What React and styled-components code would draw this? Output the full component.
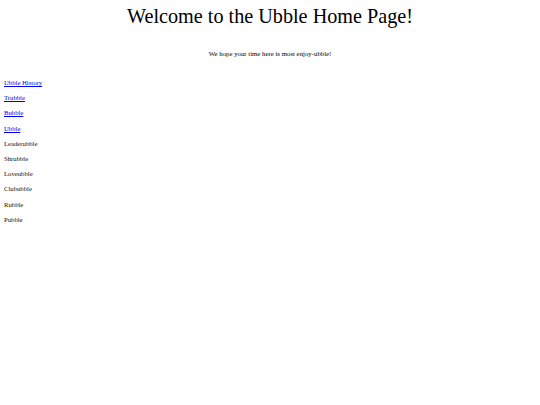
import React from "react";
import styled, { createGlobalStyle } from "styled-components";

const GlobalStyle = createGlobalStyle`
  body {
    margin: 0;
    background: white;
    font-family: "Liberation Serif", "Times New Roman", serif;
    color: black;
  }
`;

const Page = styled.div`
  display: flex;
  flex-direction: column;
  padding: 0 4px;
`;

const Title = styled.h1`
  margin: 4px 0 0;
  text-align: center;
  font-size: 20.2px;
  font-weight: normal;
  line-height: 24px;
`;

const Tagline = styled.p`
  margin: 21px 0 0;
  text-align: center;
  font-size: 6.8px;
  line-height: 10px;
`;

const Menu = styled.nav`
  display: flex;
  flex-direction: column;
  gap: 5.1px;
  margin-top: 19px;
  font-size: 6.7px;
  line-height: 10.1px;
`;

const MenuLink = styled.a`
  color: #0000ee;
  text-decoration: underline;
`;

const MenuItem = styled.span`
  color: #111;
`;

const links = ["Ubble History", "Trubble", "Bubble", "Ubble"];
const items = ["Leaderubble", "Shrubble", "Loveubble", "Clububble", "Rubble", "Pubble"];

export default function App() {
  return (
    <>
      <GlobalStyle />
      <Page>
        <Title>Welcome to the Ubble Home Page!</Title>
        <Tagline>We hope your time here is most enjoy-ubble!</Tagline>
        <Menu>
          {links.map((l) => (
            <MenuLink key={l} href="#">
              {l}
            </MenuLink>
          ))}
          {items.map((i) => (
            <MenuItem key={i}>{i}</MenuItem>
          ))}
        </Menu>
      </Page>
    </>
  );
}
